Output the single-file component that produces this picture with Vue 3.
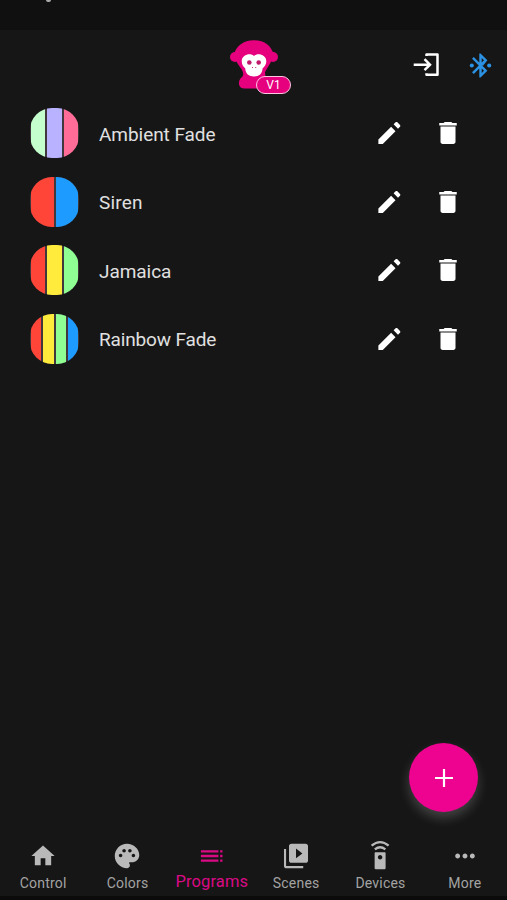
<template>
  <div class="app">
    <div class="status-bar">
      <span class="status-dot"></span>
    </div>

    <header class="toolbar">
      <div class="logo">
        <svg width="64" height="54" viewBox="0 0 64 54">
          <g fill="#e6007e">
            <circle cx="6" cy="19" r="5" />
            <circle cx="44" cy="19" r="5" />
            <path d="M25 2.300C14 2.300 7.500 8.500 5.500 15C5.500 22 9.500 27 12.500 31C15 35.500 14.500 37.500 12.500 39.500C8.500 42.500 9 50.500 15 50.500H38L36 34.500C37 31 43 25 44.500 16C42.500 8.500 36 2.300 25 2.300Z" />
          </g>
          <path fill="#fff" d="M25 18C22 14.500 13 16 12.700 23C12.700 27 14.800 29 16.300 30.500C16.300 35.500 20 38.500 25 38.500C30 38.500 33.500 35.500 33.500 30.500C35 29 37.300 27 37.300 23C37 16 28 14.500 25 18Z" />
          <g fill="#c0186c">
            <circle cx="20.300" cy="24.500" r="2.300" />
            <circle cx="29.700" cy="24.500" r="2.300" />
            <circle cx="23.500" cy="29.500" r=".6" />
            <circle cx="26.700" cy="29.500" r=".6" />
          </g>
        </svg>
        <span class="version">V1</span>
      </div>
      <div class="actions">
        <svg width="28" height="28" viewBox="0 0 28 28" fill="none" stroke="#fff" stroke-width="2.500">
          <path d="M14.500 5V3.500H25.500V23.800H14.500V22.300" stroke-linejoin="round" />
          <path d="M1.700 13.700H18M12.500 8.200L18 13.700L12.500 19.200" />
        </svg>
        <svg width="29" height="29" viewBox="0 0 24 24" fill="#2b92e4">
          <path d="M14.240 12.010l-.01-.01 3.480-4.290L12 2h-1v7.590L6.410 5 5 6.410 10.590 12 5 17.590 6.410 19 11 14.410V22h1l5.710-5.710-4.300-4.290 .83.010zM13 5.830l1.880 1.880L13 9.590V5.830zm1.880 10.460L13 18.170v-3.760l1.880 1.880z" />
          <circle cx="4.800" cy="12" r="1.700" />
          <circle cx="19.200" cy="12" r="1.700" />
        </svg>
      </div>
    </header>

    <main class="programs">
      <div v-for="program in programs" :key="program.name" class="program">
        <div class="swatch">
          <span v-for="color in program.colors" :key="color" :style="{ background: color }"></span>
        </div>
        <span class="name" :style="{ letterSpacing: program.spacing }">{{ program.name }}</span>
        <div class="row-actions">
          <button type="button" aria-label="Edit">
            <svg width="30" height="30" viewBox="0 0 24 24" fill="#fff">
              <path d="M3.500 17.200V20.700h3.500L17.200 10.500l-3.500-3.500L3.500 17.200zM20.800 7c.39-.39.39-1.020 0-1.410l-2.100-2.100c-.39-.39-1.020-.39-1.410 0l-1.600 1.600 3.500 3.500L20.800 7z" />
            </svg>
          </button>
          <button type="button" aria-label="Delete">
            <svg width="30" height="30" viewBox="0 0 24 24" fill="#fff">
              <path d="M6 19c0 1.100.7 1.700 1.800 1.700h8.400c1.100 0 1.800-.6 1.800-1.700V6.700H6V19zM19 3.900h-3.500l-.8-.7H9.300l-.8.7H5v2h14V3.900z" />
            </svg>
          </button>
        </div>
      </div>
    </main>

    <button class="fab" type="button" aria-label="Add">
      <svg width="18" height="18" viewBox="0 0 18 18" stroke="#fff" stroke-width="2.200">
        <path d="M9 0V18M0 9H18" />
      </svg>
    </button>

    <nav class="tabs">
      <div v-for="tab in tabs" :key="tab.label" :class="['tab', { active: tab.active }]">
        <svg width="28" height="28" viewBox="0 0 24 24" fill="currentColor">
          <path :d="tab.icon" />
          <path v-if="tab.waves" class="waves" :d="tab.waves" />
        </svg>
        <span>{{ tab.label }}</span>
      </div>
    </nav>
  </div>
</template>

<script setup>
const programs = [
  { name: 'Ambient Fade', colors: ['#c4ffce', '#b9b3ff', '#ff6c98'], spacing: '-0.05px' },
  { name: 'Siren', colors: ['#ff4438', '#1e9bff'], spacing: '0.2px' },
  { name: 'Jamaica', colors: ['#ff4438', '#ffeb3b', '#8fff94'], spacing: '-0.05px' },
  { name: 'Rainbow Fade', colors: ['#ff4438', '#ffeb3b', '#8fff94', '#1e9bff'], spacing: '-0.15px' }
]

const tabs = [
  { label: 'Control', icon: 'M10 20v-6h4v6h5v-8h3L12 3 2 12h3v8z' },
  {
    label: 'Colors',
    icon: 'M12 1.500C6.300 1.500 1.500 6.200 1.500 12s4.790 10.400 10.500 10.400c1.380 0 2.500-1.120 2.500-2.500 0-.61-.23-1.200-.64-1.670-.08-.1-.13-.21-.13-.33 0-.28.22-.5.5-.5H16c3.610 0 6.500-2.690 6.500-6.300 0-4.960-4.690-9.600-10.500-9.600zm-5.500 11.500c-.83 0-1.500-.67-1.500-1.500S5.670 10 6.500 10 8 10.670 8 11.500 7.330 13 6.500 13zm3-4C8.670 9 8 8.330 8 7.500S8.670 6 9.500 6s1.500.67 1.500 1.500S10.330 9 9.500 9zm5 0c-.83 0-1.500-.67-1.500-1.500S13.670 6 14.500 6s1.500.67 1.500 1.500S15.330 9 14.500 9zm3 4c-.83 0-1.500-.67-1.500-1.500s.67-1.500 1.500-1.500 1.500.67 1.500 1.500-.67 1.500-1.500 1.500z'
  },
  {
    label: 'Programs',
    active: true,
    icon: 'M2.500 9h15V7h-15v2zm0 4h15v-2h-15v2zm0 4h15v-2h-15v2zm16.500 0h2v-2h-2v2zm0-10v2h2V7h-2zm0 6h2v-2h-2v2z'
  },
  {
    label: 'Scenes',
    icon: 'M3.500 6H1.700v14.500c0 1.100.9 2 2 2h14.500v-2H3.500V6zm16.800-4.500H8c-1.100 0-2 .9-2 2v12.300c0 1.100.9 2 2 2h12.300c1.100 0 2-.9 2-2V3.500c0-1.100-.9-2-2-2zM12 14V5.500l5.500 4.250-5.500 4.250z'
  },
  {
    label: 'Devices',
    icon: 'M16 8.700H8.200c-.45 0-.8.35-.8.8v13c0 .45.35.8.8.8H16c.45 0 .8-.35.800-.8v-13c0-.45-.35-.8-.8-.8zM12.100 15c-1.100 0-1.900-.8-1.900-1.900s.8-1.900 1.900-1.900 1.900.8 1.900 1.900-.8 1.900-1.900 1.900z',
    waves: 'M4.800 3.200Q12.100-3 19.400 3.200M7.600 6.300Q12.100 2.700 16.600 6.300'
  },
  {
    label: 'More',
    icon: 'M5.700 9.900c-1.160 0-2.100.94-2.100 2.100s.94 2.100 2.100 2.100 2.100-.94 2.100-2.100-.94-2.100-2.100-2.100zm12.600 0c-1.160 0-2.100.94-2.100 2.100s.94 2.100 2.100 2.100 2.100-.94 2.100-2.100-.94-2.100-2.100-2.100zm-6.300 0c-1.160 0-2.100.94-2.100 2.100s.94 2.100 2.100 2.100 2.100-.94 2.100-2.100-.94-2.100-2.100-2.100z'
  }
]
</script>

<style>
body {
  margin: 0;
  background: #161616;
}
</style>

<style scoped>
.app {
  position: relative;
  display: flex;
  flex-direction: column;
  height: 900px;
  overflow: hidden;
  background: #161616;
  color: #e0e0e0;
  font-family: Roboto, sans-serif;
}
button {
  display: flex;
  padding: 0;
  border: 0;
  background: none;
}
.status-bar {
  height: 30px;
  flex: none;
  background: #101010;
}
.status-dot {
  display: block;
  width: 5px;
  height: 2px;
  margin-left: 46px;
  border-radius: 0 0 3px 3px;
  background: #aaa;
}
.toolbar {
  display: flex;
  align-items: center;
  justify-content: space-between;
  box-sizing: border-box;
  height: 69px;
  flex: none;
  padding: 1px 12px 0 229px;
}
.logo {
  position: relative;
  width: 64px;
  height: 54px;
}
.logo svg {
  display: block;
}
.version {
  position: absolute;
  left: 27px;
  top: 38px;
  box-sizing: border-box;
  width: 35px;
  height: 18px;
  border: 1.500px solid #ffc4e2;
  border-radius: 9px;
  background: #e6007e;
  color: #fff;
  font-size: 12px;
  line-height: 16px;
  text-align: center;
}
.actions {
  display: flex;
  align-items: center;
  gap: 26px;
}
.programs {
  flex: 1;
}
.program {
  display: flex;
  align-items: center;
  height: 68.500px;
  padding: 0 44px 0 30px;
}
.swatch {
  display: flex;
  gap: 2px;
  box-sizing: border-box;
  width: 49px;
  height: 50px;
  padding: 0 1px;
  border-radius: 22px;
  overflow: hidden;
  background: #40383c;
}
.swatch span {
  flex: 1;
}
.name {
  flex: 1;
  padding: 2px 0 0 20px;
  font-size: 19px;
}
.row-actions {
  display: flex;
  gap: 29px;
}
.fab {
  position: absolute;
  left: 409px;
  top: 743px;
  align-items: center;
  justify-content: center;
  width: 69px;
  height: 69px;
  border-radius: 50%;
  background: #ee0290;
  box-shadow: 0 6px 12px rgba(255, 255, 255, 0.2);
}
.tabs {
  display: grid;
  grid-template-columns: repeat(6, 1fr);
  height: 60px;
  flex: none;
  padding-left: 1px;
  border-bottom: 4px solid #0b0b0b;
}
.tab {
  display: flex;
  flex-direction: column;
  align-items: center;
  padding-top: 6px;
  color: #b9b9b9;
  font-size: 14px;
}
.tab svg {
  overflow: visible;
}
.waves {
  fill: none;
  stroke: currentColor;
  stroke-width: 2;
}
.tab span {
  height: 22px;
  line-height: 26px;
  letter-spacing: 0.200px;
  color: #a3a3a3;
}
.active,
.active span {
  color: #da0a85;
}
.active span {
  font-size: 16.500px;
  line-height: 23px;
  letter-spacing: 0.100px;
}
</style>
